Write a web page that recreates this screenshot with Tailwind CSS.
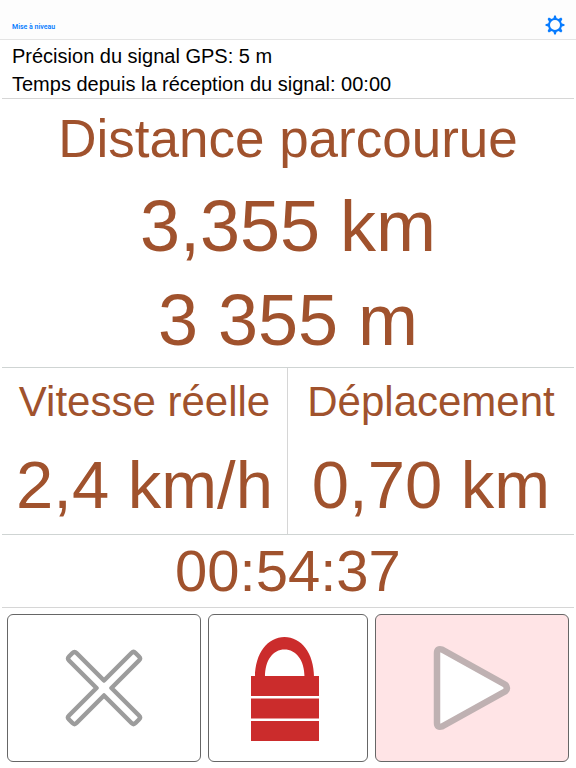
<!DOCTYPE html>
<html lang="fr">
<head>
    <meta charset="UTF-8">
    <meta name="viewport" content="width=device-width, initial-scale=1.0">
    <title>Distance parcourue</title>
    <script src="https://cdn.jsdelivr.net/npm/@tailwindcss/browser@4"></script>
</head>
<body class="bg-white min-h-screen flex flex-col font-['Liberation_Sans',Arial,sans-serif] text-black">
    <header class="flex items-end justify-between h-10 pl-3 pr-[11px] pb-1 bg-[#fdfdfd] border-b border-[#e4e4e4]">
        <a href="#" class="font-['Roboto',sans-serif] text-[7px] leading-4 font-semibold text-[#087cff]">Mise à niveau</a>
        <button type="button" aria-label="Réglages" class="text-[#087cff]">
            <svg class="w-5 h-5" viewBox="0 0 20 20" fill="none" stroke="currentColor">
                <circle cx="10" cy="10" r="6" stroke-width="2" />
                <path fill="currentColor" stroke="none" d="M8 4.500 9.200.5h1.600L12 4.500zM8 15.500l1.200 4h1.600l1.200-4zM4.500 8 .5 9.200v1.600L4.500 12zM15.500 8l4 1.200v1.600L15.500 12zM4.400 7.500 2.600 3.900l1.300-1.300L7.500 4.400zM15.600 7.500l1.800-3.600-1.300-1.300L12.500 4.400zM4.400 12.500l-1.800 3.600 1.300 1.300L7.500 15.600zM15.600 12.500l1.800 3.600-1.300 1.300-3.600-1.800z" />
            </svg>
        </button>
    </header>

    <main class="flex-1 flex flex-col mx-[2px]">
        <!-- GPS status -->
        <section class="px-[10px] pt-[2px] border-b border-[#d6d6d6] text-[20px] leading-7 whitespace-nowrap">
            <p>Précision du signal GPS: 5 m</p>
            <p>Temps depuis la réception du signal: 00:00</p>
        </section>

        <!-- Distance -->
        <section class="border-b border-[#cfd4d3] text-center text-[#a0522d] whitespace-nowrap">
            <h1 class="text-[53px] leading-[80px]">Distance parcourue</h1>
            <p class="text-[72px] leading-[94px]">3,355 km</p>
            <p class="text-[72px] leading-[94px]">3 355 m</p>
        </section>

        <!-- Speed and displacement -->
        <section class="grid grid-cols-2 border-b border-[#cfd4d3] text-center text-[#a0522d] whitespace-nowrap">
            <div class="border-r border-[#d6d6d6]">
                <h2 class="text-[42px] leading-[68px]">Vitesse réelle</h2>
                <p class="text-[67px] leading-[98px]">2,4 km/h</p>
            </div>
            <div>
                <h2 class="text-[42px] leading-[68px]">Déplacement</h2>
                <p class="text-[67px] leading-[98px]">0,70 km</p>
            </div>
        </section>

        <section class="border-b border-[#d6d6d6] text-center text-[#a0522d]">
            <p class="text-[58px] leading-[72px]">00:54:37</p>
        </section>

        <!-- Controls -->
        <section class="flex-1 grid grid-cols-[17fr_14fr_17fr] gap-[7px] px-[5px] py-[6px]">
            <button type="button" aria-label="Effacer" class="flex items-center justify-center border border-[#666] rounded-md">
                <svg class="w-20 h-20" viewBox="0 0 80 80" fill="none" stroke="#9c9c9c" stroke-width="4.500" stroke-linejoin="round">
                    <path d="M40 32.500 67.500 5Q69.500 3 71.500 5L75 8.500Q77 10.500 75 12.500L47.500 40 75 67.500Q77 69.500 75 71.500L71.500 75Q69.500 77 67.500 75L40 47.500 12.500 75Q10.500 77 8.500 75L5 71.500Q3 69.500 5 67.500L32.500 40 5 12.500Q3 10.500 5 8.500L8.500 5Q10.500 3 12.500 5Z" />
                </svg>
            </button>
            <button type="button" aria-label="Verrouiller" class="flex items-center justify-center border border-[#666] rounded-md">
                <svg class="w-[74px] h-[106px]" viewBox="0 -2 74 106" fill="#cb2c2c">
                    <path d="M4 40C4 16 17 0 33.500 0S63 16 63 40H53.500C53.500 23 45 12.500 33.500 12.500S14 23 14 40Z" />
                    <path d="M0 39h68v20H0zM0 61.500h68v20H0zM0 84h68v20H0z" />
                </svg>
            </button>
            <button type="button" aria-label="Démarrer" class="flex items-center justify-center border border-[#666] rounded-md bg-[#ffe4e6]">
                <svg class="w-20 h-[88px]" viewBox="0 0 80 88" fill="#fff" stroke="#bfb1b2" stroke-width="6.500" stroke-linejoin="round">
                    <path d="M5 9Q5 4 10 5.500L73 40.500Q77 44 73 47.500L10 82.500Q5 84 5 79Z" />
                </svg>
            </button>
        </section>
    </main>
</body>
</html>
